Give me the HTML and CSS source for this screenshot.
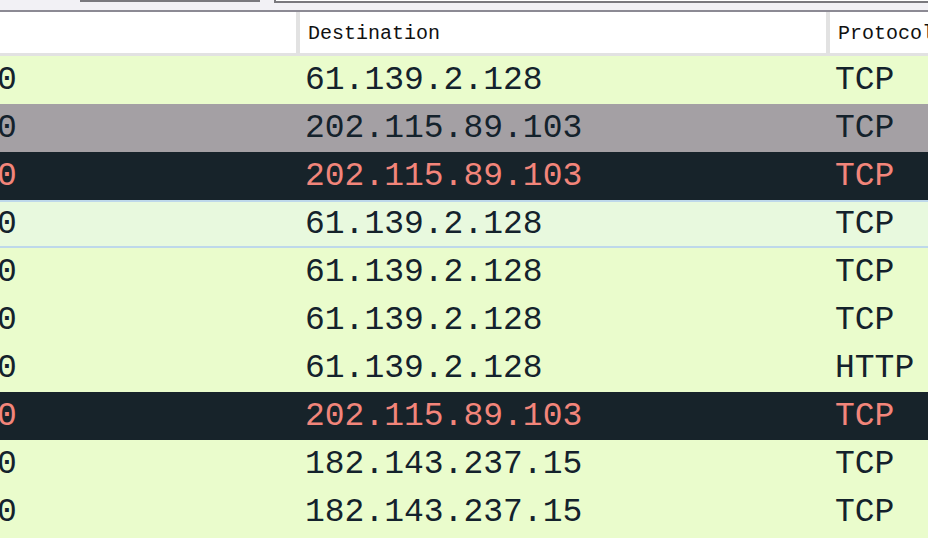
FILE: index.html
```html
<!DOCTYPE html>
<html>
<head>
<meta charset="utf-8">
<link rel="stylesheet" href="styles.css">
</head>
<body>
<div class="topbar">
  <div class="tab"></div>
  <div class="filter"></div>
</div>
<div class="divider"></div>
<div class="header">
  <div class="hcell c1"></div>
  <div class="hcell c2">Destination</div>
  <div class="hcell c3">Protocol</div>
</div>
<div class="rows">
  <div class="row green"><span class="c1">0</span><span class="c2">61.139.2.128</span><span class="c3">TCP</span></div>
  <div class="row gray"><span class="c1">0</span><span class="c2">202.115.89.103</span><span class="c3">TCP</span></div>
  <div class="row dark"><span class="c1">0</span><span class="c2">202.115.89.103</span><span class="c3">TCP</span></div>
  <div class="row sel"><span class="c1">0</span><span class="c2">61.139.2.128</span><span class="c3">TCP</span></div>
  <div class="row green"><span class="c1">0</span><span class="c2">61.139.2.128</span><span class="c3">TCP</span></div>
  <div class="row green"><span class="c1">0</span><span class="c2">61.139.2.128</span><span class="c3">TCP</span></div>
  <div class="row green"><span class="c1">0</span><span class="c2">61.139.2.128</span><span class="c3">HTTP</span></div>
  <div class="row dark"><span class="c1">0</span><span class="c2">202.115.89.103</span><span class="c3">TCP</span></div>
  <div class="row green"><span class="c1">0</span><span class="c2">182.143.237.15</span><span class="c3">TCP</span></div>
  <div class="row green"><span class="c1">0</span><span class="c2">182.143.237.15</span><span class="c3">TCP</span></div>
  <div class="row green"><span class="c1">0</span><span class="c2">182.143.237.15</span><span class="c3">TCP</span></div>
</div>
</body>
</html>
```

FILE: styles.css
```css
html, body {
  margin: 0;
  padding: 0;
  width: 928px;
  height: 538px;
  overflow: hidden;
  background: #eafccc;
}
.topbar {
  height: 10px;
  background: #f2f1f5;
  display: flex;
  align-items: flex-start;
}
.tab {
  margin-left: 80px;
  width: 180px;
  height: 2px;
  background: #7a797e;
}
.filter {
  margin-left: 14px;
  flex: 1;
  height: 1px;
  border-left: 2px solid #7a797e;
  border-bottom: 2px solid #7a797e;
  background: #ffffff;
}
.divider {
  height: 2px;
  background: #8c8a94;
}
.header {
  display: grid;
  grid-template-columns: 300px 530px 1fr;
  height: 41px;
  background: #ffffff;
  border-bottom: 3px solid #e2e2e2;
  font-family: "Liberation Mono", "DejaVu Sans Mono", monospace;
  font-size: 20px;
  color: #111;
}
.hcell {
  display: flex;
  align-items: center;
  padding-left: 8px;
  padding-top: 2px;
  white-space: nowrap;
  overflow: hidden;
}
.hcell.c1, .hcell.c2 {
  border-right: 4px solid #e2e2e2;
}
.hcell.c1 { padding-left: 0; }
.rows {
  font-family: "Liberation Mono", "DejaVu Sans Mono", monospace;
  font-size: 33px;
}
.row {
  display: grid;
  grid-template-columns: 300px 530px 1fr;
  height: 48px;
  align-items: center;
  color: #14222c;
  white-space: nowrap;
  overflow: hidden;
}
.row .c1 { margin-left: -3px; }
.row .c2, .row .c3 { padding-left: 5px; }
.green { background: #eafccc; }
.gray { background: #a4a0a4; color: #14222c; }
.dark { background: #17232a; color: #f2857a; }
.sel {
  background: #e8f9de;
  border-top: 2px solid #bed8ea;
  border-bottom: 2px solid #bed8ea;
  height: 44px;
}
```
